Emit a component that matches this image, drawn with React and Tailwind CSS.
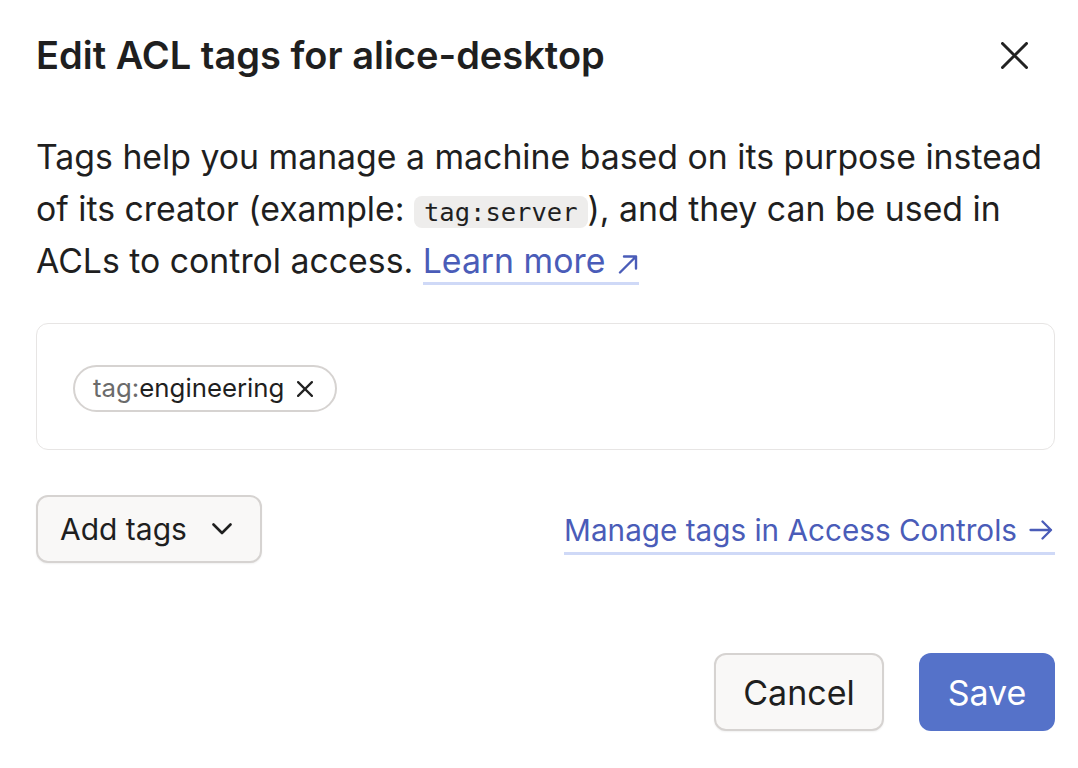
const font = { fontFamily: 'Inter, "Noto Sans", sans-serif' };

const Cross = ({ size, stroke, className }) => (
  <svg width={size} height={size} viewBox={`0 0 ${size} ${size}`} className={className} fill="none">
    <path
      d={`M${stroke / 2} ${stroke / 2}L${size - stroke / 2} ${size - stroke / 2}M${size - stroke / 2} ${stroke / 2}L${stroke / 2} ${size - stroke / 2}`}
      stroke="currentColor"
      strokeWidth={stroke}
      strokeLinecap="round"
    />
  </svg>
);

const App = () => {
  return (
    <div className="min-h-screen bg-white text-[#1f1f1f]" style={font}>
      <div className="pl-[36px] pr-[23px] pt-[35px]">
        {/* Header */}
        <div className="flex items-center justify-between">
          <h2 className="text-[38px] leading-[40px] font-semibold">
            Edit ACL tags for alice-desktop
          </h2>
          <button className="mr-[27px] text-[#222]">
            <Cross size={27} stroke={3} />
          </button>
        </div>

        {/* Description */}
        <p className="mt-[56px] max-w-[1010px] text-[33.8px] leading-[52px]">
          Tags help you manage a machine based on its purpose instead of its creator (example:{' '}
          <code className="rounded-[8px] bg-[#eeedec] px-[10px] py-[1px] text-[25.5px] leading-none font-['DejaVu_Sans_Mono',monospace]">
            tag:server
          </code>
          ), and they can be used in ACLs to control access.{' '}
          <a className="text-[#4a5cb8] border-b-[3px] border-[#cfd9f7] pb-[1px]">
            Learn more
            <svg width="22" height="20" viewBox="0 0 22 20" fill="none" className="inline-block ml-[12px] align-[-1px]">
              <path d="M3 18.5L19 2.5M7 2.5H19V14.5" stroke="currentColor" strokeWidth="2.4" strokeLinecap="round" strokeLinejoin="round" />
            </svg>
          </a>
        </p>

        {/* Tag box */}
        <div className="mt-[36px] rounded-[12px] border border-[#e7e5e4] pl-[36px] pt-[41px] pb-[37px]">
          <div className="inline-flex items-center gap-[13px] h-[47px] rounded-full border-2 border-[#d6d3d1] pl-[18px] pr-[22px] text-[25.8px]">
            <span>
              <span className="text-[#6b6b6b]">tag:</span>engineering
            </span>
            <Cross size={16} stroke={2.2} className="text-[#222]" />
          </div>
        </div>

        {/* Add tags row */}
        <div className="mt-[45px] flex items-center justify-between">
          <button className="flex items-center gap-[25px] h-[68px] rounded-[12px] border-2 border-[#d6d3d1] bg-[#f9f8f7] pl-[22px] pr-[28px] text-[30px] shadow-[0_1px_2px_rgba(0,0,0,0.06)]">
            Add tags
            <svg width="20" height="12" viewBox="0 0 20 12" fill="none">
              <path d="M1.5 1.5L10 10L18.5 1.5" stroke="currentColor" strokeWidth="2.6" strokeLinecap="round" strokeLinejoin="round" />
            </svg>
          </button>
          <a className="mt-[5px] flex items-center gap-[12px] text-[29.7px] leading-[44px] text-[#4a5cb8] border-b-[3px] border-[#cfd9f7]">
            Manage tags in Access Controls
            <svg width="24" height="20" viewBox="0 0 24 20" fill="none" className="mr-[2px]">
              <path d="M1.5 10H22M13.5 1.5L22 10L13.5 18.5" stroke="currentColor" strokeWidth="2.3" strokeLinecap="round" strokeLinejoin="round" />
            </svg>
          </a>
        </div>

        {/* Footer */}
        <div className="mt-[90px] flex justify-end gap-[35px]">
          <button className="h-[78px] w-[170px] rounded-[12px] border-2 border-[#d6d3d1] bg-[#f9f8f7] text-[34px] shadow-[0_1px_2px_rgba(0,0,0,0.06)]">
            Cancel
          </button>
          <button className="h-[78px] w-[136px] rounded-[12px] bg-[#5572c9] text-[34px] text-white">
            Save
          </button>
        </div>
      </div>
    </div>
  );
};

export default App;
